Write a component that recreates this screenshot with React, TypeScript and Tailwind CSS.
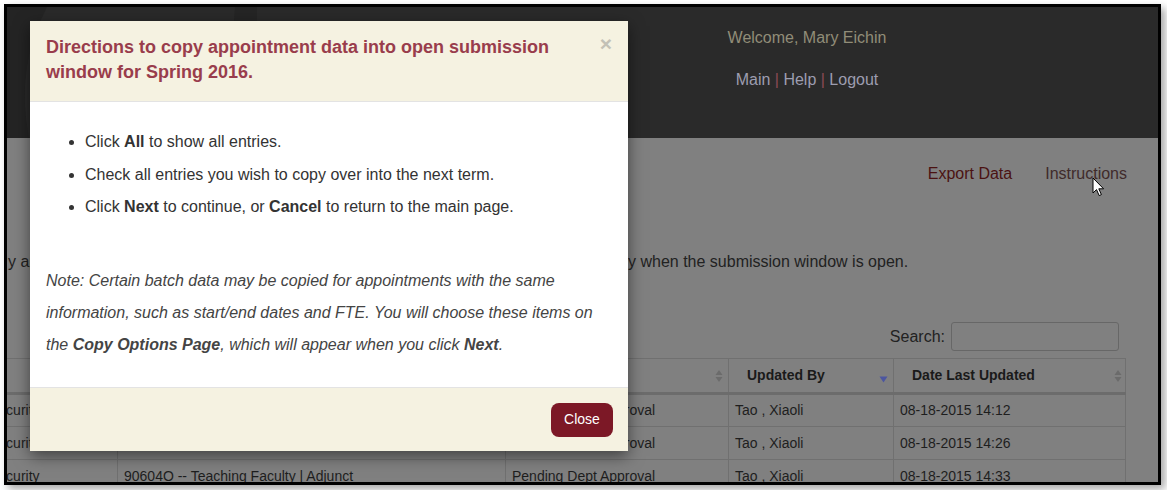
import React from "react";

const font = { fontFamily: '"Liberation Sans", Arial, sans-serif' };

function SortBoth() {
  return (
    <svg width="8" height="14" viewBox="0 0 8 14" className="inline-block">
      <path d="M4 1 L7.5 6 H0.5 Z" fill="#6b6b6b" />
      <path d="M4 13 L7.5 8 H0.5 Z" fill="#6b6b6b" />
    </svg>
  );
}

function SortDown() {
  return (
    <svg width="9" height="7" viewBox="0 0 9 7" className="inline-block">
      <path d="M0.5 0.5 H8.5 L4.5 6.5 Z" fill="#4c56a0" />
    </svg>
  );
}

function Cursor() {
  return (
    <svg width="13" height="20" viewBox="0 0 13 20">
      <path
        d="M1 1 L1 16 L4.5 12.6 L7.2 18.6 L9.4 17.6 L6.8 11.8 L11.6 11.8 Z"
        fill="#fff"
        stroke="#000"
        strokeWidth="1"
        strokeLinejoin="round"
      />
    </svg>
  );
}

const rows = [
  ["Security", "", "Pending Dept Approval", "Tao , Xiaoli", "08-18-2015 14:12"],
  ["Security", "", "Pending Dept Approval", "Tao , Xiaoli", "08-18-2015 14:26"],
  ["Security", "90604O -- Teaching Faculty | Adjunct", "Pending Dept Approval", "Tao , Xiaoli", "08-18-2015 14:33"],
];

export default function App() {
  return (
    <div className="w-[1167px] h-[490px] bg-white pl-[4px] pt-[4px]" style={font}>
      <div className="relative w-[1157px] h-[481px] border-[3px] border-black bg-[#808080] overflow-hidden shadow-[4px_4px_8px_rgba(0,0,0,0.35)]">
        {/* Header */}
        <div className="relative h-[131px] bg-[#2a2a2a] flex">
          <svg width="250" height="131" viewBox="0 0 250 131" className="absolute left-0 top-0">
            <path d="M0 0 H40 Q8 60 22 131 H0 Z" fill="#242424" />
            <path d="M228 0 H250 V131 H238 Q222 60 228 0 Z" fill="#252525" />
          </svg>
          <div className="ml-[600px] w-[400px] text-center text-[16px]">
            <div className="mt-[22px] leading-[18px] text-[#918d78]">Welcome, Mary Eichin</div>
            <div className="mt-[24px] leading-[18px] text-[#9d9db0]">
              Main <span className="text-[#8a4a55]">|</span> Help{" "}
              <span className="text-[#8a4a55]">|</span> Logout
            </div>
          </div>
        </div>

        {/* Links */}
        <div className="mt-[27px] flex justify-end gap-[33px] pr-[31px] text-[16px] leading-[18px]">
          <span className="text-[#4b1212]">Export Data</span>
          <span className="text-[#3f2b2b]">Instructions</span>
        </div>

        <div className="mt-[70px] flex whitespace-nowrap text-[16px] leading-[18px] text-[#222]">
          <span className="w-[621px] overflow-hidden pl-[1px]">
            y appointment data into the next term. Appointments may be copied onl
          </span>
          <span>y when the submission window is open.</span>
        </div>

        {/* Search */}
        <div className="mt-[51px] flex justify-end items-center gap-[6px] pr-[39px]">
          <span className="text-[16px] text-[#222]">Search:</span>
          <div className="w-[168px] h-[29px] rounded-[3px] border border-[#676767] bg-[#808080]" />
        </div>

        {/* Table */}
        <table className="mt-[7px] ml-[-24px] w-[1142px] table-fixed border-collapse text-[14px] text-[#1e1e1e]">
          <colgroup>
            <col className="w-[134px]" />
            <col className="w-[388px]" />
            <col className="w-[223px]" />
            <col className="w-[165px]" />
            <col className="w-[232px]" />
          </colgroup>
          <thead>
            <tr className="h-[35px] border-b-[3px] border-[#6c6c6c]">
              <th className="border border-[#707070]" />
              <th className="border border-[#707070]" />
              <th className="border border-[#707070] text-right pr-[5px]">
                <SortBoth />
              </th>
              <th className="border border-[#707070] text-left font-bold pl-[18px] pr-[5px] text-[#1a1a1a]">
                <div className="flex items-center justify-between">
                  <span>Updated By</span>
                  <span className="mt-[6px]">
                    <SortDown />
                  </span>
                </div>
              </th>
              <th className="border border-[#707070] text-left font-bold pl-[18px] pr-[3px] text-[#1a1a1a]">
                <div className="flex items-center justify-between">
                  <span>Date Last Updated</span>
                  <SortBoth />
                </div>
              </th>
            </tr>
          </thead>
          <tbody>
            {rows.map((r, i) => (
              <tr key={i} className="h-[33px]">
                {r.map((c, j) => (
                  <td
                    key={j}
                    className={`border border-[#707070] whitespace-nowrap overflow-hidden ${
                      j === 0 ? "pl-[5px]" : "pl-[6px]"
                    }`}
                  >
                    {c}
                  </td>
                ))}
              </tr>
            ))}
          </tbody>
        </table>

        {/* Mouse cursor */}
        <div className="absolute left-[1085px] top-[170px]">
          <Cursor />
        </div>

        {/* Modal */}
        <div className="absolute left-[23px] top-[14px] w-[598px] bg-white shadow-[0_5px_15px_rgba(0,0,0,0.5)]">
          <div className="relative bg-[#f5f2e1] border-b border-[#e3e3e3] px-[16px] pt-[14px] pb-[15px] h-[81px]">
            <h4 className="pr-[30px] text-[18px] leading-[25px] font-bold text-[#993d4c]">
              Directions to copy appointment data into open submission window for Spring 2016.
            </h4>
            <span className="absolute right-[16px] top-[10px] text-[21px] font-bold leading-[25px] text-[#c3c1b6]">
              ×
            </span>
          </div>
          <div className="px-[16px] pt-[24px] pb-[26px] text-[16px] text-[#333]">
            <ul className="list-disc pl-[39px] leading-[32.5px]">
              <li>
                Click <b>All</b> to show all entries.
              </li>
              <li>Check all entries you wish to copy over into the next term.</li>
              <li>
                Click <b>Next</b> to continue, or <b>Cancel</b> to return to the main page.
              </li>
            </ul>
            <p className="mt-[41px] pr-[10px] italic leading-[32px] text-[#444]">
              Note: Certain batch data may be copied for appointments with the same information, such as
              start/end dates and FTE. You will choose these items on the <b>Copy Options Page</b>, which
              will appear when you click <b>Next</b>.
            </p>
          </div>
          <div className="bg-[#f5f2e1] border-t border-[#e3e3e3] h-[64px] flex justify-end items-start pt-[15px] pr-[15px]">
            <button className="h-[34px] w-[62px] rounded-[8px] bg-[#7c1826] text-white text-[14px]">
              Close
            </button>
          </div>
        </div>
      </div>
    </div>
  );
}
